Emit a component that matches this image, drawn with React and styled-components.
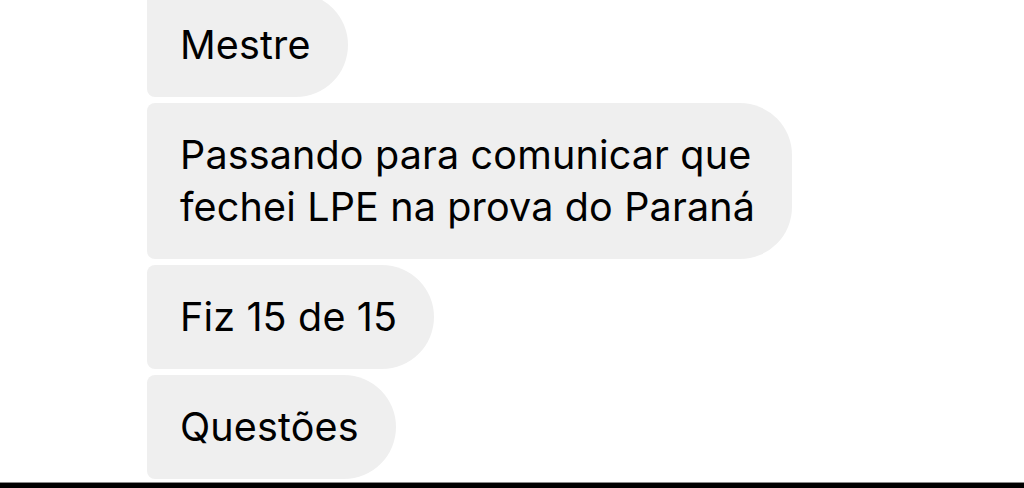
import React from 'react';
import styled, { createGlobalStyle } from 'styled-components';

const GlobalStyle = createGlobalStyle`
  html, body {
    margin: 0;
    padding: 0;
    background: #ffffff;
  }
  body {
    font-family: Inter, "Noto Sans", "Liberation Sans", sans-serif;
    -webkit-font-smoothing: antialiased;
  }
`;

const messages = [
  'Mestre',
  'Passando para comunicar que\nfechei LPE na prova do Paraná',
  'Fiz 15 de 15',
  'Questões',
];

const Page = styled.div`
  height: 488px;
  display: grid;
  grid-template-rows: 1fr auto;
  overflow: hidden;
  background: #ffffff;
`;

const Thread = styled.div`
  display: flex;
  flex-direction: column;
  align-items: flex-start;
  gap: 6px;
  padding-left: 147px;
  margin-top: -7px;
  min-height: 0;
`;

const Bubble = styled.div`
  background: #efefef;
  color: #000000;
  font-size: 39.5px;
  line-height: 52px;
  letter-spacing: 0.15px;
  padding: 26px 37px 26px 33px;
  border-radius: 8px 52px 52px 8px;
  white-space: pre-line;
`;

const BottomBar = styled.div`
  height: 5px;
  background: #000000;
  border-top: 1px solid #8a8a8a;
`;

export default function App() {
  return (
    <>
      <GlobalStyle />
      <Page>
        <Thread>
          {messages.map((text, i) => (
            <Bubble key={i}>{text}</Bubble>
          ))}
        </Thread>
        <BottomBar />
      </Page>
    </>
  );
}
